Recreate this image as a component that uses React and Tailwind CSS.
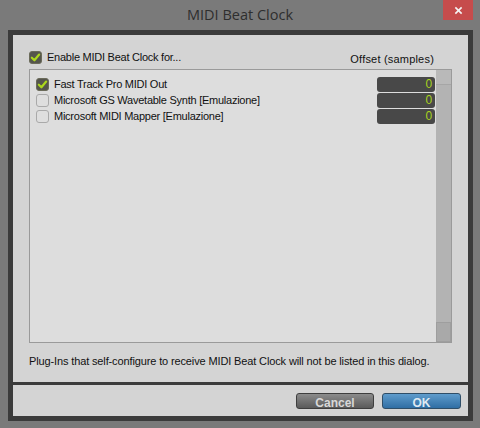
const devices = [
  { name: "Fast Track Pro MIDI Out", checked: true, offset: 0 },
  { name: "Microsoft GS Wavetable Synth [Emulazione]", checked: false, offset: 0 },
  { name: "Microsoft MIDI Mapper [Emulazione]", checked: false, offset: 0 },
];

function Check({ checked }) {
  if (!checked) {
    return (
      <span className="block h-[13px] w-[13px] shrink-0 rounded-[3px] border border-[#a9a9a9] bg-[#dedede]" />
    );
  }
  return (
    <span className="flex h-[13px] w-[13px] shrink-0 items-center justify-center rounded-[3px] border border-[#6b6b5a] bg-[#55554c]">
      <svg viewBox="0 0 12 12" className="h-[11px] w-[11px]">
        <path
          d="M2 6.3 L4.8 9 L10 2.8"
          fill="none"
          stroke="#acd81c"
          strokeWidth="2.4"
          strokeLinecap="round"
          strokeLinejoin="round"
        />
      </svg>
    </span>
  );
}

export default function App() {
  return (
    <div className="flex h-[428px] w-[480px] flex-col bg-[#7a7a7a] font-['Liberation_Sans',Arial,sans-serif] text-[11px] tracking-[-0.25px] text-[#111]">
      <div className="relative flex h-[30px] shrink-0 items-center justify-center">
        <span className="font-['Open_Sans',sans-serif] text-[14.5px] tracking-normal text-[#2e2e2e]">
          MIDI Beat Clock
        </span>
        <div className="absolute right-[7px] top-0 flex h-[20px] w-[30px] items-center justify-center bg-[#c64c4c]">
          <svg viewBox="0 0 10 10" className="h-[9px] w-[9px]">
            <path d="M1.5 1.5 L8.5 8.5 M8.5 1.5 L1.5 8.5" stroke="#f4f4f4" strokeWidth="1.8" />
          </svg>
        </div>
      </div>

      <div className="ml-[8px] mr-[7px] flex flex-col bg-[#3b3b3b] p-[5px]">
        <div className="flex h-[347px] flex-col bg-[#d4d4d4] px-[16px]">
          <div className="flex h-[34px] items-start justify-between">
            <label className="mt-[14px] flex items-center gap-[5px]">
              <Check checked />
              <span>Enable MIDI Beat Clock for...</span>
            </label>
            <span className="mr-[18px] mt-[16px] tracking-[0.2px]">Offset (samples)</span>
          </div>

          <div className="flex h-[274px] border border-[#9a9a9a] bg-[#dddddd]">
            <div className="flex flex-1 flex-col pl-[6px] pr-[1px] pt-[6px]">
              {devices.map((d) => (
                <div key={d.name} className="flex h-[16px] items-center">
                  <Check checked={d.checked} />
                  <span className="ml-[5px] flex-1">{d.name}</span>
                  <span className="flex h-[15px] w-[58px] items-center justify-end rounded-[3px] bg-[#484848] pr-[3px] text-[12px] text-[#a9d21e]">
                    {d.offset}
                  </span>
                </div>
              ))}
            </div>
            <div className="flex w-[15px] flex-col bg-[#b3b3b3]">
              <div className="h-[15px] border-b border-[#a6a6a6] bg-[#b9b9b9]" />
              <div className="flex-1" />
              <div className="h-[20px] border border-[#9e9e9e] bg-[#a9a9a9]" />
            </div>
          </div>

          <p className="mt-[10px] tracking-[-0.13px]">
            Plug-Ins that self-configure to receive MIDI Beat Clock will not be listed in this dialog.
          </p>
        </div>

        <div className="mt-[3px] flex h-[31px] items-center justify-end gap-[8px] bg-[#d4d4d4] pr-[7px]">
          <button className="h-[16px] w-[78px] rounded-[3px] border border-[#3e3e3e] bg-gradient-to-b from-[#8c8c8c] to-[#5a5a5a] text-[12px] font-bold tracking-normal text-[#d8d8d8]">
            Cancel
          </button>
          <button className="h-[16px] w-[79px] rounded-[3px] border border-[#2f4e68] bg-gradient-to-b from-[#5f9ccc] to-[#2f6ea4] text-[12px] font-bold tracking-normal text-[#dfe9f2]">
            OK
          </button>
        </div>
      </div>
    </div>
  );
}
